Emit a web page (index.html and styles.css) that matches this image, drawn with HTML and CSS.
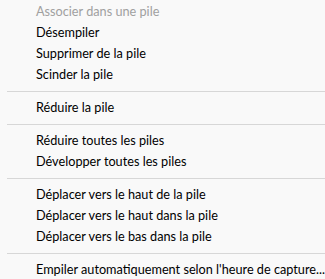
FILE: index.html
```html
<!DOCTYPE html>
<html lang="fr">
<head>
<meta charset="utf-8">
<link rel="stylesheet" href="styles.css">
</head>
<body>
<div class="menu">
  <div class="item disabled">Associer dans une pile</div>
  <div class="item">Désempiler</div>
  <div class="item">Supprimer de la pile</div>
  <div class="item">Scinder la pile</div>
  <div class="sep"></div>
  <div class="item">Réduire la pile</div>
  <div class="sep"></div>
  <div class="item">Réduire toutes les piles</div>
  <div class="item">Développer toutes les piles</div>
  <div class="sep"></div>
  <div class="item">Déplacer vers le haut de la pile</div>
  <div class="item">Déplacer vers le haut dans la pile</div>
  <div class="item">Déplacer vers le bas dans la pile</div>
  <div class="sep"></div>
  <div class="item">Empiler automatiquement selon l'heure de capture...</div>
</div>
</body>
</html>
```
FILE: styles.css
```css
html, body {
  margin: 0;
  padding: 0;
  background: #f9f9f9;
}
.menu {
  width: 325px;
  height: 279px;
  overflow: hidden;
  font-family: Lato, "Noto Sans", sans-serif;
  font-size: 12.7px;
  color: #000;
  display: flex;
  flex-direction: column;
}
.item {
  height: 21px;
  line-height: 23px;
  padding-left: 36px;
  white-space: nowrap;
}
.item.disabled {
  color: #a0a0a0;
}
.sep {
  height: 1px;
  background: #d7d7d7;
  margin: 7px 0 4px 7px;
}
```
